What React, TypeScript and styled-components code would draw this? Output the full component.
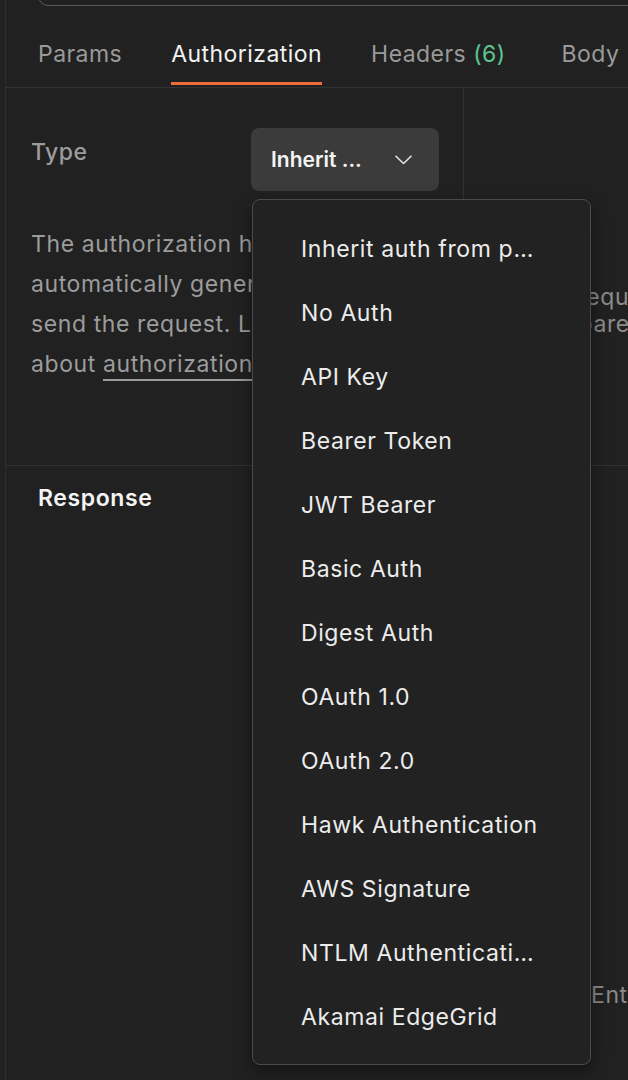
import React from "react";
import styled, { createGlobalStyle } from "styled-components";

const GlobalStyle = createGlobalStyle`
  html, body {
    margin: 0;
    padding: 0;
    background: #212121;
  }
  body {
    font-family: Inter, "Noto Sans", "Liberation Sans", sans-serif;
    -webkit-font-smoothing: antialiased;
  }
  * { box-sizing: border-box; }
`;

const Page = styled.div`
  position: relative;
  width: 628px;
  height: 1080px;
  overflow: hidden;
  background: #212121;
  padding-left: 5px;
`;

const Main = styled.div`
  height: 100%;
  border-left: 1px solid #2e2e2e;
  display: flex;
  flex-direction: column;
`;

const UrlBox = styled.div`
  margin: -40px -40px 0 32px;
  height: 46px;
  border: 1.5px solid #5a5a5a;
  border-radius: 10px;
  flex-shrink: 0;
`;

const TabBar = styled.div`
  height: 82px;
  flex-shrink: 0;
  display: flex;
  gap: 49px;
  padding-left: 32px;
  border-bottom: 1px solid #333333;
`;

const Tab = styled.div<{ $active?: boolean }>`
  position: relative;
  display: flex;
  align-items: center;
  padding-top: 15px;
  font-size: 23px;
  letter-spacing: 0.45px;
  white-space: nowrap;
  color: ${(p) => (p.$active ? "#f2f2f2" : "#9a9a9a")};
  &::after {
    content: "";
    display: ${(p) => (p.$active ? "block" : "none")};
    position: absolute;
    left: 0;
    right: 0;
    bottom: 2px;
    height: 3px;
    background: #f26b3a;
  }
`;

const Count = styled.span`
  color: #5cc58f;
  margin: 0 7px 0 7px;
`;

const Split = styled.div`
  height: 378px;
  flex-shrink: 0;
  display: grid;
  grid-template-columns: 458px 1fr;
  border-bottom: 1px solid #333333;
`;

const LeftPane = styled.div`
  border-right: 1px solid #333333;
  padding: 40px 0 0 25px;
`;

const TypeRow = styled.div`
  display: flex;
  align-items: flex-start;
`;

const TypeLabel = styled.div`
  width: 220px;
  flex-shrink: 0;
  padding-top: 12px;
  line-height: 24px;
  font-size: 23px;
  letter-spacing: 0.5px;
  font-weight: 500;
  color: #9c9c9c;
`;

const SelectButton = styled.div`
  width: 188px;
  height: 63px;
  flex-shrink: 0;
  border-radius: 8px;
  background: #3b3b3b;
  display: flex;
  align-items: center;
  justify-content: space-between;
  padding: 0 27px 0 20px;
  font-size: 21px;
  font-weight: 600;
  color: #f4f4f4;
`;

const Description = styled.p`
  margin: 33px 0 0;
  width: 400px;
  font-size: 23px;
  letter-spacing: 0.6px;
  line-height: 40px;
  color: #9c9c9c;
`;

const DocLink = styled.span`
  text-decoration: underline;
  text-underline-offset: 7px;
  text-decoration-thickness: 1.5px;
`;

const RightPane = styled.div`
  padding: 196px 0 0 26px;
  font-size: 23px;
  letter-spacing: 0.6px;
  line-height: 27px;
  color: #8c8c8c;
  white-space: nowrap;
`;

const ResponseSection = styled.div`
  flex: 1;
  display: flex;
  flex-direction: column;
`;

const ResponseTitle = styled.div`
  padding: 20px 0 0 32px;
  line-height: 24px;
  font-size: 23px;
  letter-spacing: 0.6px;
  font-weight: 600;
  color: #f4f4f4;
`;

const EmptyState = styled.div`
  margin: 471px 0 0 585px;
  font-size: 23px;
  letter-spacing: 0.6px;
  line-height: 28px;
  color: #8a8a8a;
  white-space: nowrap;
`;

const Menu = styled.div`
  position: absolute;
  left: 252px;
  top: 199px;
  width: 339px;
  padding: 17px 0 15px;
  background: #222222;
  border: 1.5px solid #4b4b4b;
  border-radius: 8px;
  box-shadow: 0 6px 18px rgba(0, 0, 0, 0.45);
`;

const MenuItem = styled.div`
  height: 64px;
  display: flex;
  align-items: center;
  padding: 0 50px 0 48px;
  font-size: 23px;
  letter-spacing: 0.6px;
  color: #ececec;
  white-space: nowrap;
`;

const ItemText = styled.span`
  overflow: hidden;
  text-overflow: ellipsis;
`;

const Chevron = () => (
  <svg width="17" height="10" viewBox="0 0 17 10" fill="none">
    <path d="M1 1.2 L8.5 8.5 L16 1.2" stroke="#e4e4e4" strokeWidth="1.6" strokeLinecap="round" strokeLinejoin="round" />
  </svg>
);

const authTypes = [
  "Inherit auth from parent",
  "No Auth",
  "API Key",
  "Bearer Token",
  "JWT Bearer",
  "Basic Auth",
  "Digest Auth",
  "OAuth 1.0",
  "OAuth 2.0",
  "Hawk Authentication",
  "AWS Signature",
  "NTLM Authentication [Beta]",
  "Akamai EdgeGrid",
];

export default function App() {
  return (
    <>
      <GlobalStyle />
      <Page>
        <Main>
          <UrlBox />
          <TabBar>
            <Tab>Params</Tab>
            <Tab $active>Authorization</Tab>
            <Tab>
              Headers<Count>(6)</Count>
            </Tab>
            <Tab>Body</Tab>
          </TabBar>
          <Split>
            <LeftPane>
              <TypeRow>
                <TypeLabel>Type</TypeLabel>
                <SelectButton>
                  <span>Inherit ...</span>
                  <Chevron />
                </SelectButton>
              </TypeRow>
              <Description>
                The authorization header will be automatically generated when you send the request. Learn more
                about <DocLink>authorization</DocLink>
              </Description>
            </LeftPane>
            <RightPane>
              for this request comes from
              <br />
              its own parent collection.
            </RightPane>
          </Split>
          <ResponseSection>
            <ResponseTitle>Response</ResponseTitle>
            <EmptyState>Enter the URL and click Send to get a response</EmptyState>
          </ResponseSection>
        </Main>
        <Menu>
          {authTypes.map((t) => (
            <MenuItem key={t}>
              <ItemText>{t}</ItemText>
            </MenuItem>
          ))}
        </Menu>
      </Page>
    </>
  );
}
